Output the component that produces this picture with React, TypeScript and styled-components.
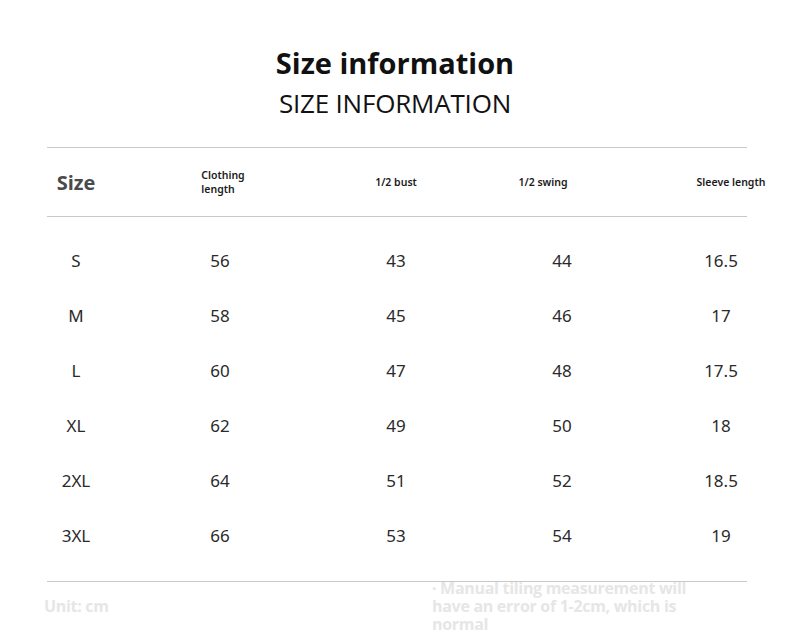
import React from 'react';
import styled, { createGlobalStyle } from 'styled-components';

const GlobalStyle = createGlobalStyle`
  html, body {
    margin: 0;
    padding: 0;
    background: #fff;
  }
  body {
    font-family: "Open Sans", "Noto Sans", sans-serif;
  }
`;

const rows = [
  ['S', '56', '43', '44', '16.5'],
  ['M', '58', '45', '46', '17'],
  ['L', '60', '47', '48', '17.5'],
  ['XL', '62', '49', '50', '18'],
  ['2XL', '64', '51', '52', '18.5'],
  ['3XL', '66', '53', '54', '19'],
];

const App = () => {
  return (
    <Page>
      <GlobalStyle />
      <Title>Size information</Title>
      <Subtitle>SIZE INFORMATION</Subtitle>
      <Table>
        <Rule />
        <HeadRow>
          <SizeHead>Size</SizeHead>
          <HeadCell>
            <Stack>
              <span>Clothing</span>
              <span>length</span>
            </Stack>
          </HeadCell>
          <HeadCell>1/2 bust</HeadCell>
          <HeadCell>1/2 swing</HeadCell>
          <HeadCell>Sleeve length</HeadCell>
        </HeadRow>
        <Rule />
        <Body>
          {rows.map((row) => (
            <DataRow key={row[0]}>
              {row.map((v, i) => (
                <Cell key={i}>{v}</Cell>
              ))}
            </DataRow>
          ))}
        </Body>
        <Rule />
      </Table>
      <Footer>
        <Unit>Unit: cm</Unit>
        <Note>· Manual tiling measurement will have an error of 1-2cm, which is normal</Note>
      </Footer>
    </Page>
  );
};

export default App;

const Page = styled.div`
  width: 790px;
  height: 643px;
  overflow: hidden;
  padding-top: 44px;
  box-sizing: border-box;
  display: flex;
  flex-direction: column;
  align-items: center;
`;

const Title = styled.h1`
  margin: 0;
  font-family: "Open Sans", sans-serif;
  font-weight: 700;
  font-size: 29px;
  line-height: 38px;
  color: #111;
`;

const Subtitle = styled.h2`
  margin: 4px 0 0;
  font-family: "Open Sans", sans-serif;
  font-weight: 400;
  font-size: 26px;
  line-height: 34px;
  letter-spacing: -0.2px;
  color: #111;
`;

const Table = styled.div`
  width: 700px;
  margin-top: 27px;
  align-self: flex-start;
  margin-left: 47px;
`;

const Rule = styled.div`
  height: 1px;
  background: #c8c8c8;
  width: 700px;
`;

const HeadRow = styled.div`
  display: grid;
  grid-template-columns: 58px 230px 122px 172px 204px;
  height: 68px;
  align-items: center;
`;

const HeadCell = styled.div`
  display: flex;
  justify-content: center;
  font-family: "Noto Sans", sans-serif;
  font-weight: 600;
  font-size: 10.5px;
  line-height: 13px;
  color: #1a1a1a;
  white-space: nowrap;
`;

const Stack = styled.div`
  display: flex;
  flex-direction: column;
  margin-left: 6px;
  span {
    line-height: 14px;
  }
`;

const SizeHead = styled.div`
  display: flex;
  justify-content: center;
  font-family: "Open Sans", sans-serif;
  font-weight: 700;
  font-size: 20px;
  color: #4a4a4a;
`;

const Body = styled.div`
  padding: 16px 0 18px;
`;

const DataRow = styled.div`
  display: grid;
  grid-template-columns: 58px 230px 122px 210px 108px;
  height: 55px;
  align-items: center;
`;

const Cell = styled.div`
  text-align: center;
  font-family: "Noto Sans", sans-serif;
  font-size: 17px;
  color: #2a2a2a;
`;

const Footer = styled.div`
  align-self: stretch;
  display: flex;
  padding: 0 0 0 44px;
  margin-top: -3px;
  font-family: "Open Sans", sans-serif;
  font-weight: 700;
  font-size: 16px;
  line-height: 18px;
  letter-spacing: -0.3px;
  color: #e6e6e6;
`;

const Unit = styled.div`
  width: 388px;
  padding-top: 18px;
`;

const Note = styled.div`
  width: 280px;
`;
